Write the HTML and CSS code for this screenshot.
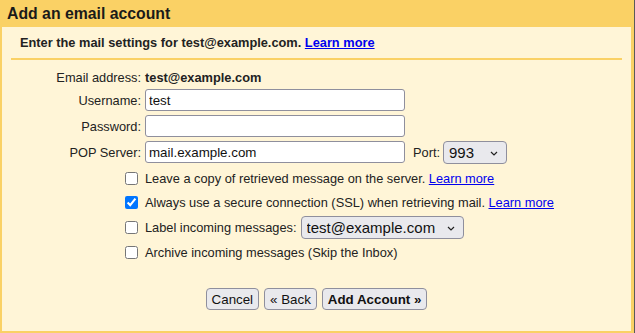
FILE: index.html
```html
<!DOCTYPE html>
<html lang="en">
<head>
  <meta charset="UTF-8" />
  <title>Add an email account</title>
  <link rel="stylesheet" href="styles.css">
</head>
<body>

<div class="dialog">
  <div class="dialog-title">Add an email account</div>

  <div class="dialog-body">
    <div class="intro">Enter the mail settings for test@example.com. <a href="#">Learn more</a></div>
    <div class="divider"></div>

    <div class="fields">
      <div class="row row-email">
        <div class="label">Email address:</div>
        <div class="value"><b>test@example.com</b></div>
      </div>

      <div class="row">
        <label class="label" for="username">Username:</label>
        <div class="value"><input type="text" id="username" value="test"></div>
      </div>

      <div class="row">
        <label class="label" for="password">Password:</label>
        <div class="value"><input type="password" id="password"></div>
      </div>

      <div class="row">
        <label class="label" for="server">POP Server:</label>
        <div class="value">
          <input type="text" id="server" value="mail.example.com">
          <label class="port-label" for="port">Port:</label>
          <span class="select-wrap">
            <select id="port" class="port-select">
              <option>993</option>
              <option>995</option>
              <option>110</option>
            </select>
            <svg class="chevron" width="8" height="5" viewBox="0 0 8 5"><path d="M1 1 L4 4 L7 1" fill="none" stroke="#222" stroke-width="1.2"/></svg>
          </span>
        </div>
      </div>

      <div class="row check-row first-check">
        <div class="label"><input type="checkbox" id="leave-copy"></div>
        <div class="value"><label for="leave-copy">Leave a copy of retrieved message on the server.</label> <a href="#">Learn more</a></div>
      </div>

      <div class="row check-row">
        <div class="label"><input type="checkbox" id="ssl" checked></div>
        <div class="value"><label for="ssl">Always use a secure connection (SSL) when retrieving mail.</label> <a href="#">Learn more</a></div>
      </div>

      <div class="row check-row label-row">
        <div class="label"><input type="checkbox" id="label-incoming"></div>
        <div class="value">
          <label for="label-incoming">Label incoming messages:</label>
          <span class="select-wrap">
            <select class="label-select">
              <option>test@example.com</option>
            </select>
            <svg class="chevron" width="8" height="5" viewBox="0 0 8 5"><path d="M1 1 L4 4 L7 1" fill="none" stroke="#222" stroke-width="1.2"/></svg>
          </span>
        </div>
      </div>

      <div class="row check-row">
        <div class="label"><input type="checkbox" id="archive"></div>
        <div class="value"><label for="archive">Archive incoming messages (Skip the Inbox)</label></div>
      </div>
    </div>

    <div class="actions">
      <button type="button">Cancel</button>
      <button type="button">&laquo; Back</button>
      <button type="button" class="primary">Add Account &raquo;</button>
    </div>
  </div>
</div>

</body>
</html>
```

FILE: styles.css
```css
* {
  box-sizing: border-box;
}

body {
  margin: 0;
  background: #5a5a5a;
  font-family: "Liberation Sans", Arial, sans-serif;
  font-size: 12.8px;
  color: #222;
}

a {
  color: #0000ee;
}

.dialog {
  width: 634px;
  height: 333px;
}

.dialog-title {
  height: 27px;
  line-height: 27px;
  padding-left: 7px;
  background: #fad165;
  font-size: 15.8px;
  font-weight: bold;
  color: #1a1a1a;
}

.dialog-body {
  height: 306px;
  background: #fff5d7;
  border: 2px solid #fad165;
  border-top: 0;
  border-right-width: 3px;
}

.intro {
  padding: 8px 0 0 18px;
  line-height: 15px;
  font-weight: bold;
}

.divider {
  height: 2px;
  margin: 8px 9px 0 9px;
  background: #fad165;
}

.fields {
  margin-top: 7px;
}

.row {
  display: flex;
  align-items: center;
  height: 26px;
}

.row-email {
  height: 20px;
}

.label {
  width: 139px;
  margin-right: 4px;
  text-align: right;
  display: flex;
  justify-content: flex-end;
  align-items: center;
}

.value {
  display: flex;
  align-items: center;
  white-space: nowrap;
}

.value a {
  margin-left: 3.5px;
}

input[type="text"],
input[type="password"] {
  width: 260px;
  height: 22px;
  padding: 0 3px;
  border: 1px solid #8f8f9d;
  border-radius: 3px;
  background: #fff;
  font-family: "Liberation Sans", Arial, sans-serif;
  font-size: 13.333px;
  color: #111;
}

input[type="checkbox"] {
  width: 13px;
  height: 13px;
  margin: 0 3px 0 0;
}

.port-label {
  margin: 0 3px 0 8px;
}

.select-wrap {
  position: relative;
  display: inline-flex;
}

select {
  appearance: none;
  -webkit-appearance: none;
  height: 23px;
  padding: 0 5px;
  border: 1px solid #8f8f9d;
  border-radius: 4px;
  background: #e9e9ed;
  font-family: "Liberation Sans", Arial, sans-serif;
  font-size: 15px;
  color: #111;
}

.port-select {
  width: 64px;
}

.label-select {
  width: 163px;
  margin-left: 4px;
}

.chevron {
  position: absolute;
  right: 9px;
  top: 10px;
  pointer-events: none;
}

.check-row {
  height: 24px;
}

.first-check {
  margin-top: 1px;
}

.label-row {
  height: 26px;
}

.actions {
  display: flex;
  justify-content: center;
  gap: 5px;
  margin-top: 24px;
}

button {
  height: 22px;
  padding: 0 5px;
  border: 1px solid #8f8f9d;
  border-radius: 4px;
  background: #e9e9ed;
  font-family: "Liberation Sans", Arial, sans-serif;
  font-size: 13.333px;
  color: #111;
}

button.primary {
  font-weight: bold;
}
```
